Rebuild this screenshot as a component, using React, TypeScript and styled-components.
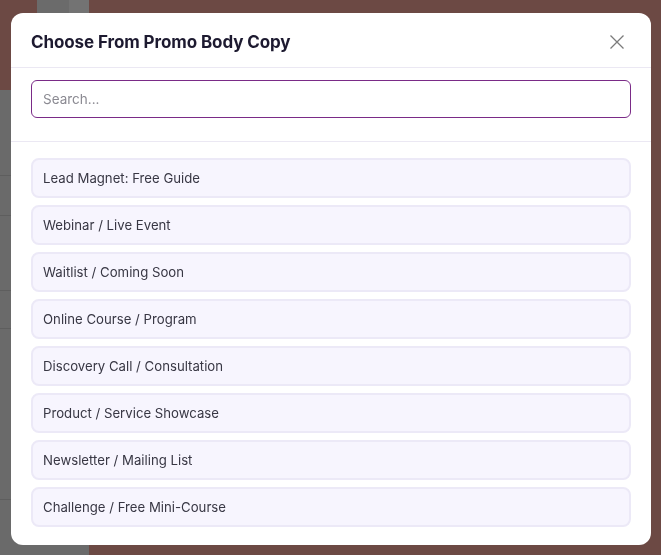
import React from 'react';
import styled, { createGlobalStyle } from 'styled-components';

const GlobalStyle = createGlobalStyle`
  html, body {
    margin: 0;
    padding: 0;
    height: 100%;
    overflow: hidden;
    font-family: Inter, "Noto Sans", sans-serif;
  }
`;

const Page = styled.div`
  display: grid;
  grid-template-columns: 89px 1fr;
  width: 100vw;
  height: 100vh;
  background: #6c4944;
`;

const Sidebar = styled.div`
  display: flex;
  flex-direction: column;
  background: #6a6a6a;
`;

const SidebarTop = styled.div`
  display: grid;
  grid-template-columns: 37px 32px 1fr;
  height: 90px;
`;

const Swatch = styled.div<{ $color: string }>`
  background: ${(p) => p.$color};
`;

const SidebarRow = styled.div<{ $h: number }>`
  height: ${(p) => p.$h}px;
  border-bottom: 1px solid #5e5e5e;
`;

const Overlay = styled.div`
  position: fixed;
  inset: 0;
  display: flex;
  align-items: flex-start;
  padding: 13px 0 0 11px;
`;

const Modal = styled.div`
  width: 640px;
  height: 532px;
  background: #ffffff;
  border-radius: 12px;
  display: flex;
  flex-direction: column;
  overflow: hidden;
`;

const Header = styled.div`
  display: flex;
  align-items: center;
  justify-content: space-between;
  height: 55px;
  padding: 4px 20px 0;
  box-sizing: border-box;
  border-bottom: 1px solid #ebe8f3;
`;

const Title = styled.h2`
  margin: 0;
  font-size: 17px;
  font-weight: 700;
  color: #1d1a30;
  letter-spacing: -0.1px;
`;

const CloseButton = styled.button`
  border: none;
  background: none;
  padding: 0;
  margin-right: 7px;
  display: flex;
  cursor: pointer;
`;

const SearchSection = styled.div`
  padding: 12px 20px 23px;
  border-bottom: 1px solid #ebe8f3;
`;

const SearchInput = styled.input`
  width: 100%;
  box-sizing: border-box;
  height: 38px;
  border: 1px solid #7a2b87;
  border-radius: 6px;
  padding: 0 11px;
  font-family: inherit;
  font-size: 13.5px;
  color: #333;
  outline: none;
  &::placeholder {
    color: #8b8a92;
  }
`;

const List = styled.div`
  display: flex;
  flex-direction: column;
  gap: 7px;
  padding: 16px 20px;
`;

const Item = styled.div`
  height: 40px;
  box-sizing: border-box;
  display: flex;
  align-items: center;
  padding: 0 10px;
  background: #f7f5fe;
  border: 2px solid #ece9f7;
  border-radius: 8px;
  font-size: 13.2px;
  color: #383744;
  cursor: pointer;
`;

const options = [
  'Lead Magnet: Free Guide',
  'Webinar / Live Event',
  'Waitlist / Coming Soon',
  'Online Course / Program',
  'Discovery Call / Consultation',
  'Product / Service Showcase',
  'Newsletter / Mailing List',
  'Challenge / Free Mini-Course',
];

const sidebarRows = [85, 39, 74, 37, 170];

export default function App() {
  return (
    <>
      <GlobalStyle />
      <Page>
        <Sidebar>
          <SidebarTop>
            <Swatch $color="#6c4944" />
            <Swatch $color="#6b6b6b" />
            <Swatch $color="#737373" />
          </SidebarTop>
          {sidebarRows.map((h, i) => (
            <SidebarRow key={i} $h={h} />
          ))}
        </Sidebar>
        <div />
      </Page>
      <Overlay>
        <Modal>
          <Header>
            <Title>Choose From Promo Body Copy</Title>
            <CloseButton aria-label="Close">
              <svg width="14" height="14" viewBox="0 0 14 14">
                <path d="M0.5 0.5 L13.5 13.5 M13.5 0.5 L0.5 13.5" stroke="#7b7b7b" strokeWidth="1.3" />
              </svg>
            </CloseButton>
          </Header>
          <SearchSection>
            <SearchInput placeholder="Search..." />
          </SearchSection>
          <List>
            {options.map((o) => (
              <Item key={o}>{o}</Item>
            ))}
          </List>
        </Modal>
      </Overlay>
    </>
  );
}
